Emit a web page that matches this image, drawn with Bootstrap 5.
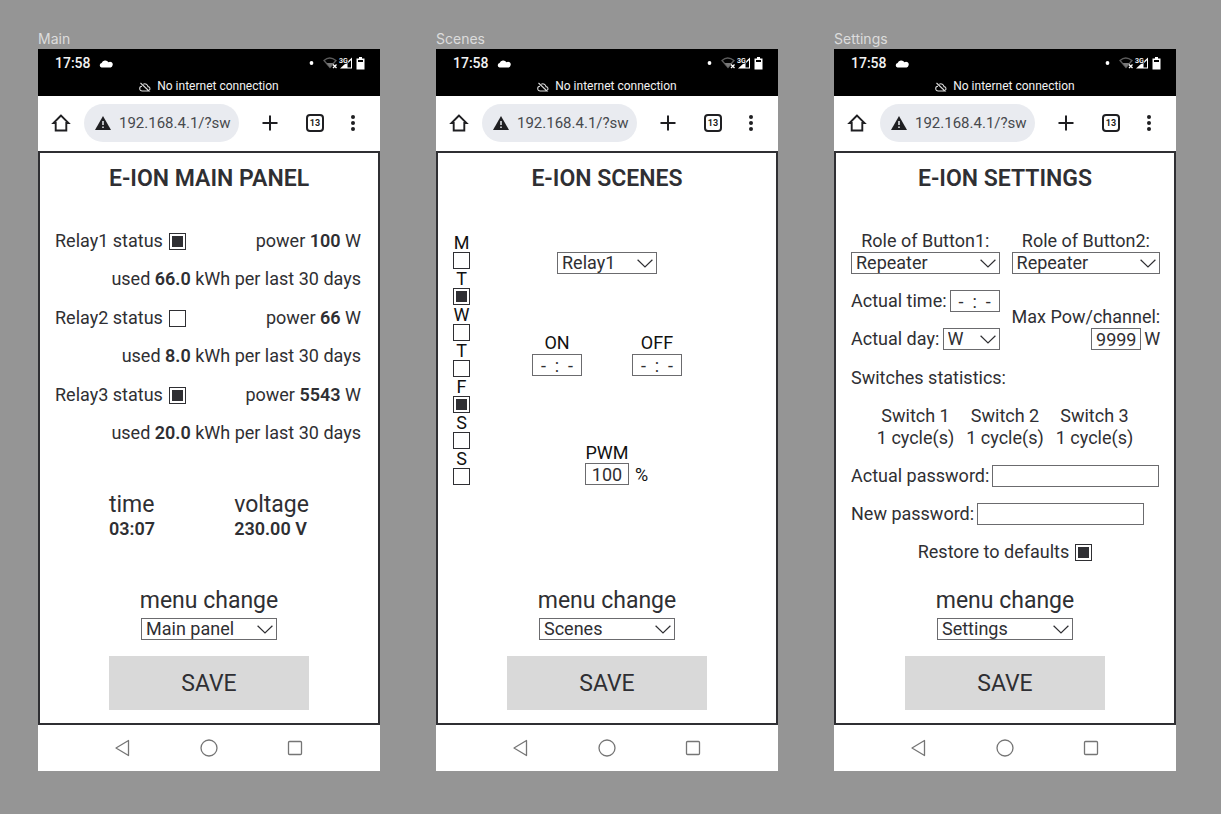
<!DOCTYPE html>
<html lang="en">
<head>
<meta charset="utf-8">
<meta name="viewport" content="width=device-width, initial-scale=1">
<title>E-ION panels</title>
<link href="https://cdn.jsdelivr.net/npm/bootstrap@5.3.0/dist/css/bootstrap.min.css" rel="stylesheet">
<style>
  :root { --ink: #2f2f33; --line: #6b6b6e; }
  body { background: #959595; color: var(--ink); font: 400 18px/22px Roboto, "Liberation Sans", sans-serif; }
  .board { display: grid; grid-template-columns: repeat(auto-fit, minmax(330px, 1fr)); gap: 28px 56px; padding: 28px 45px 43px 38px; }
  .board-title { font: 400 14px/21px Inter, sans-serif; color: #dcdcdc; margin: 0; }
  .phone { background: #fff; flex: 1; }

  .status-bar { background: #000; color: #f2f2f2; }
  .status-top { height: 28px; padding: 0 15px 0 17px; font-size: 14px; font-weight: 500; }
  .status-net { height: 19px; font-size: 12px; line-height: 19px; gap: 6px; }
  .tool-bar { height: 55px; padding: 0 25px 1px 13px; }
  .address { background: #e9ebf0; height: 38px; border-radius: 19px; padding: 0 8px 0 11px; margin: 0 22px 0 13px; min-width: 0; }
  .address input { border: 0; background: none; outline: 0; padding: 0; width: 100%; min-width: 0; font-size: 15px; color: #47494d; }
  .tool-actions { gap: 27px; }
  .plain { background: none; border: 0; padding: 0; display: flex; color: #1f1f22; }
  .tabs-count { border: 2px solid #1f1f22; border-radius: 4px; width: 18px; height: 18px; font-size: 9px; line-height: 14px; font-weight: 700; align-items: center; justify-content: center; }
  .nav-keys { height: 46px; gap: 68px; }

  .screen { border: 2px solid var(--ink); padding: 13px 15px; min-height: 574px; }
  .screen-title { font-size: 23px; line-height: 26px; font-weight: 600; margin: 0 0 38px; text-align: center; }
  .big { font-size: 23px; line-height: 28px; }
  .rows { display: flex; flex-direction: column; gap: 16px; }
  .readings { width: 200px; margin: 47px auto 0; line-height: 20px; }
  .relays { gap: 17px; padding-right: 2px; }
  b { font-weight: 600; }

  .field, .choice { border: 1px solid var(--line); border-radius: 0; background-color: #fff; color: var(--ink); font-size: 18px; line-height: 20px; height: 22px; min-height: 0; padding: 0 4px; }
  .choice { --bs-form-select-bg-img: url("data:image/svg+xml,%3csvg xmlns='http://www.w3.org/2000/svg' viewBox='0 0 16 9'%3e%3cpath d='M.6.8 8 8l7.4-7.2' fill='none' stroke='%232f2f33' stroke-width='1.2'/%3e%3c/svg%3e"); background-size: 16px 9px; background-position: right 3px center; }
  .field { text-align: center; }
  .w-time { width: 50px; padding: 0; }
  .w-pwm { width: 44px; padding: 0; }
  .w-menu { width: 136px; }
  .w-relay { width: 100px; }
  .w-day { width: 57px; }
  .w-pass { width: 167px; }
  .tick.form-check-input { width: 17px; height: 17px; margin: 0; border: 1px solid var(--ink); border-radius: 0; background-size: 100%; flex: none; float: none; }
  .tick.form-check-input:checked { background-color: #fff; border-color: var(--ink); background-image: url("data:image/svg+xml,%3csvg xmlns='http://www.w3.org/2000/svg' viewBox='0 0 15 15'%3e%3cpath d='M2 2h11v11H2z' fill='%232f2f33'/%3e%3c/svg%3e"); }

  .scene { display: grid; grid-template-columns: 17px 1fr 17px; color: #111; margin-top: 3px; }
  .day { display: flex; flex-direction: column; align-items: center; line-height: 19px; }
  .scene-form { padding-top: 19px; }
  .on-off { gap: 50px; margin: 58px 0 66px; }
  .pwm { display: grid; grid-template-columns: 1fr auto 1fr; column-gap: 6px; align-items: center; line-height: 21px; }
  .pwm label { grid-column: 2; text-align: center; margin: 0 -5px; }
  .pwm input { grid-column: 2; }
  .pairs { display: grid; grid-template-columns: 1fr 1fr; gap: 16px 12px; padding-bottom: 1px; }
  .inline-pair { display: flex; align-items: center; gap: 3px; white-space: nowrap; }
  .switches { gap: 12px; text-align: center; }
  .restore { gap: 6px; }
  .menu-block { margin-top: auto; }
  .menu-block .choice { margin-top: 3px; }
  .save { background: #d9d9d9; color: var(--ink); border: 0; border-radius: 0; width: 200px; height: 54px; font-size: 23px; line-height: 28px; margin-top: 16px; padding: 2px 0 0; }
</style>
</head>
<body>
<svg class="d-none" aria-hidden="true">
  <symbol id="i-cloud" viewBox="0 0 14 9"><path fill="#fff" d="M2.500 8.500A2.300 2.300 0 0 1 2.600 4 4 4 0 0 1 9.500 3.200 2.700 2.700 0 0 1 13.500 6.500 2.400 2.400 0 0 1 11.700 8.500z"/></symbol>
  <symbol id="i-radio" viewBox="0 0 56 14">
    <circle cx="2.500" cy="7" r="1.900" fill="#fff"/>
    <path d="M15 4.500Q20.500-.5 27 4.500L21 11.500z" fill="none" stroke="#5c5c5c" stroke-width="1.300"/><path d="M17.500 7h7L21 11.500z" fill="#777"/>
    <path d="M24 8.500l3.500 3.500m0-3.500L24 12" stroke="#fff" stroke-width="1.300"/>
    <path d="M31 12.500 43 1.500v11z" fill="#fff"/><path d="M38.500 7.500 42 4.200v7.300h-3.500z" fill="#000"/>
    <text x="30" y="6.500" font-size="7" font-weight="600" fill="#fff" stroke="#000" stroke-width="1.500" paint-order="stroke">3G</text>
    <path d="M50 1h3v1.500h2.500v11h-8v-11H50z" fill="#fff"/><path d="M49 4h5v2h-5z" fill="#000"/>
  </symbol>
  <symbol id="i-nocloud" viewBox="0 0 12 10"><path fill="none" stroke="#ddd" stroke-width="1.100" d="M1.500 1l8.500 8H3.200A2.300 2.300 0 0 1 3 4.200M4.300 2.200A3.200 3.200 0 0 1 9 4.600 2 2 0 0 1 10.400 8"/></symbol>
  <symbol id="i-home" viewBox="0 0 20 20"><path fill="none" stroke="#1f1f22" stroke-width="1.900" d="M10 2.500 2.500 10H4.700V17.500h10.600V10h2.200z"/></symbol>
  <symbol id="i-warn" viewBox="0 0 16 14"><path fill="#1f1f22" d="M8 0l8 14H0z"/><path stroke="#e9ebf0" stroke-width="1.500" d="M8 5v4m0 1.400v1.600"/></symbol>
  <symbol id="i-plus" viewBox="0 0 18 18"><path stroke="#1f1f22" stroke-width="2" d="M9 1.500v15M1.500 9h15"/></symbol>
  <symbol id="i-dots" viewBox="0 0 4 18"><g fill="#1f1f22"><circle cx="2" cy="3" r="2"/><circle cx="2" cy="9" r="2"/><circle cx="2" cy="15" r="2"/></g></symbol>
  <symbol id="i-back" viewBox="0 0 18 18"><path fill="none" stroke="#757575" stroke-width="1.300" stroke-linejoin="round" d="M14.500 1.500v15L2 9z"/></symbol>
  <symbol id="i-round" viewBox="0 0 18 18"><circle cx="9" cy="9" r="8" fill="none" stroke="#757575" stroke-width="1.300"/></symbol>
  <symbol id="i-square" viewBox="0 0 18 18"><rect x="2.500" y="2.500" width="13" height="13" rx="1" fill="none" stroke="#757575" stroke-width="1.300"/></symbol>
</svg>

<main class="board">
  <section class="d-flex flex-column">
    <h2 class="board-title">Main</h2>
    <div class="phone d-flex flex-column">
      <header class="status-bar">
        <div class="status-top d-flex align-items-center">17:58<svg class="ms-2" width="14" height="9"><use href="#i-cloud"/></svg><svg class="ms-auto" width="56" height="14"><use href="#i-radio"/></svg></div>
        <div class="status-net d-flex align-items-center justify-content-center"><svg width="12" height="10"><use href="#i-nocloud"/></svg>No internet connection</div>
      </header>
      <div class="tool-bar d-flex align-items-center">
        <button class="plain" aria-label="Home"><svg width="20" height="20"><use href="#i-home"/></svg></button>
        <div class="address d-flex align-items-center flex-grow-1"><svg class="me-2 flex-shrink-0" width="16" height="14"><use href="#i-warn"/></svg><input type="text" aria-label="Address" value="192.168.4.1/?switch"></div>
        <div class="tool-actions d-flex align-items-center"><button class="plain" aria-label="New tab"><svg width="18" height="18"><use href="#i-plus"/></svg></button><button class="plain tabs-count">13</button><button class="plain" aria-label="More"><svg width="4" height="18"><use href="#i-dots"/></svg></button></div>
      </div>
      <form class="screen d-flex flex-column flex-grow-1">
        <h1 class="screen-title">E-ION MAIN PANEL</h1>
        <div class="rows relays">
          <div class="rows">
            <div class="d-flex justify-content-between"><span class="d-flex align-items-center restore"><label for="r1">Relay1 status</label><input class="form-check-input tick" type="checkbox" id="r1" checked></span><span>power <b>100</b> W</span></div>
            <div class="text-end">used <b>66.0</b> kWh per last 30 days</div>
          </div>
          <div class="rows">
            <div class="d-flex justify-content-between"><span class="d-flex align-items-center restore"><label for="r2">Relay2 status</label><input class="form-check-input tick" type="checkbox" id="r2"></span><span>power <b>66</b> W</span></div>
            <div class="text-end">used <b>8.0</b> kWh per last 30 days</div>
          </div>
          <div class="rows">
            <div class="d-flex justify-content-between"><span class="d-flex align-items-center restore"><label for="r3">Relay3 status</label><input class="form-check-input tick" type="checkbox" id="r3" checked></span><span>power <b>5543</b> W</span></div>
            <div class="text-end">used <b>20.0</b> kWh per last 30 days</div>
          </div>
        </div>
        <div class="readings d-flex justify-content-between">
          <div><div class="big">time</div><b>03:07</b></div>
          <div><div class="big">voltage</div><b>230.00 V</b></div>
        </div>
        <div class="menu-block d-flex flex-column align-items-center">
          <label class="big" for="m1">menu change</label>
          <select class="form-select choice w-menu" id="m1"><option>Main panel</option><option>Scenes</option><option>Settings</option></select>
          <button type="button" class="btn save">SAVE</button>
        </div>
      </form>
      <nav class="nav-keys d-flex align-items-center justify-content-center"><button class="plain" aria-label="Back"><svg width="18" height="18"><use href="#i-back"/></svg></button><button class="plain" aria-label="Home screen"><svg width="18" height="18"><use href="#i-round"/></svg></button><button class="plain" aria-label="Recent"><svg width="18" height="18"><use href="#i-square"/></svg></button></nav>
    </div>
  </section>

  <section class="d-flex flex-column">
    <h2 class="board-title">Scenes</h2>
    <div class="phone d-flex flex-column">
      <header class="status-bar">
        <div class="status-top d-flex align-items-center">17:58<svg class="ms-2" width="14" height="9"><use href="#i-cloud"/></svg><svg class="ms-auto" width="56" height="14"><use href="#i-radio"/></svg></div>
        <div class="status-net d-flex align-items-center justify-content-center"><svg width="12" height="10"><use href="#i-nocloud"/></svg>No internet connection</div>
      </header>
      <div class="tool-bar d-flex align-items-center">
        <button class="plain" aria-label="Home"><svg width="20" height="20"><use href="#i-home"/></svg></button>
        <div class="address d-flex align-items-center flex-grow-1"><svg class="me-2 flex-shrink-0" width="16" height="14"><use href="#i-warn"/></svg><input type="text" aria-label="Address" value="192.168.4.1/?switch"></div>
        <div class="tool-actions d-flex align-items-center"><button class="plain" aria-label="New tab"><svg width="18" height="18"><use href="#i-plus"/></svg></button><button class="plain tabs-count">13</button><button class="plain" aria-label="More"><svg width="4" height="18"><use href="#i-dots"/></svg></button></div>
      </div>
      <form class="screen d-flex flex-column flex-grow-1">
        <h1 class="screen-title">E-ION SCENES</h1>
        <div class="scene">
          <div>
            <div class="day"><label for="d1">M</label><input class="form-check-input tick" type="checkbox" id="d1"></div>
            <div class="day"><label for="d2">T</label><input class="form-check-input tick" type="checkbox" id="d2" checked></div>
            <div class="day"><label for="d3">W</label><input class="form-check-input tick" type="checkbox" id="d3"></div>
            <div class="day"><label for="d4">T</label><input class="form-check-input tick" type="checkbox" id="d4"></div>
            <div class="day"><label for="d5">F</label><input class="form-check-input tick" type="checkbox" id="d5" checked></div>
            <div class="day"><label for="d6">S</label><input class="form-check-input tick" type="checkbox" id="d6"></div>
            <div class="day"><label for="d7">S</label><input class="form-check-input tick" type="checkbox" id="d7"></div>
          </div>
          <div class="scene-form">
            <select class="form-select choice w-relay mx-auto" aria-label="Relay"><option>Relay1</option><option>Relay2</option><option>Relay3</option></select>
            <div class="on-off d-flex justify-content-center">
              <div class="d-flex flex-column align-items-center"><label for="on">ON</label><input class="field w-time" id="on" type="text" value="-&nbsp; :&nbsp; -"></div>
              <div class="d-flex flex-column align-items-center"><label for="off">OFF</label><input class="field w-time" id="off" type="text" value="-&nbsp; :&nbsp; -"></div>
            </div>
            <div class="pwm"><label for="pwm">PWM</label><input class="field w-pwm" id="pwm" type="text" value="100"><span>%</span></div>
          </div>
        </div>
        <div class="menu-block d-flex flex-column align-items-center">
          <label class="big" for="m2">menu change</label>
          <select class="form-select choice w-menu" id="m2"><option>Main panel</option><option selected>Scenes</option><option>Settings</option></select>
          <button type="button" class="btn save">SAVE</button>
        </div>
      </form>
      <nav class="nav-keys d-flex align-items-center justify-content-center"><button class="plain" aria-label="Back"><svg width="18" height="18"><use href="#i-back"/></svg></button><button class="plain" aria-label="Home screen"><svg width="18" height="18"><use href="#i-round"/></svg></button><button class="plain" aria-label="Recent"><svg width="18" height="18"><use href="#i-square"/></svg></button></nav>
    </div>
  </section>

  <section class="d-flex flex-column">
    <h2 class="board-title">Settings</h2>
    <div class="phone d-flex flex-column">
      <header class="status-bar">
        <div class="status-top d-flex align-items-center">17:58<svg class="ms-2" width="14" height="9"><use href="#i-cloud"/></svg><svg class="ms-auto" width="56" height="14"><use href="#i-radio"/></svg></div>
        <div class="status-net d-flex align-items-center justify-content-center"><svg width="12" height="10"><use href="#i-nocloud"/></svg>No internet connection</div>
      </header>
      <div class="tool-bar d-flex align-items-center">
        <button class="plain" aria-label="Home"><svg width="20" height="20"><use href="#i-home"/></svg></button>
        <div class="address d-flex align-items-center flex-grow-1"><svg class="me-2 flex-shrink-0" width="16" height="14"><use href="#i-warn"/></svg><input type="text" aria-label="Address" value="192.168.4.1/?switch"></div>
        <div class="tool-actions d-flex align-items-center"><button class="plain" aria-label="New tab"><svg width="18" height="18"><use href="#i-plus"/></svg></button><button class="plain tabs-count">13</button><button class="plain" aria-label="More"><svg width="4" height="18"><use href="#i-dots"/></svg></button></div>
      </div>
      <form class="screen d-flex flex-column flex-grow-1">
        <h1 class="screen-title">E-ION SETTINGS</h1>
        <div class="rows">
          <div class="pairs">
            <div class="d-flex flex-column align-items-center"><label for="b1">Role of Button1:</label><select class="form-select choice" id="b1"><option>Repeater</option></select></div>
            <div class="d-flex flex-column align-items-center"><label for="b2">Role of Button2:</label><select class="form-select choice" id="b2"><option>Repeater</option></select></div>
            <div class="rows">
              <div class="inline-pair justify-content-between"><label for="at">Actual time:</label><input class="field w-time" id="at" type="text" value="-&nbsp; :&nbsp; -"></div>
              <div class="inline-pair justify-content-between"><label for="ad">Actual day:</label><select class="form-select choice w-day" id="ad"><option>W</option></select></div>
            </div>
            <div class="d-flex flex-column justify-content-end align-items-end text-nowrap">
              <label for="mp">Max Pow/channel:</label>
              <div class="inline-pair"><input class="field w-time" id="mp" type="text" value="9999"><span>W</span></div>
            </div>
          </div>
          <div>Switches statistics:</div>
          <div class="switches d-flex justify-content-center">
            <div>Switch 1<br>1 cycle(s)</div><div>Switch 2<br>1 cycle(s)</div><div>Switch 3<br>1 cycle(s)</div>
          </div>
          <div class="inline-pair"><label for="p1">Actual password:</label><input class="field w-pass" id="p1" type="password"></div>
          <div class="inline-pair"><label for="p2">New password:</label><input class="field w-pass" id="p2" type="password"></div>
          <div class="restore d-flex align-items-center justify-content-center"><label for="rd">Restore to defaults</label><input class="form-check-input tick" type="checkbox" id="rd" checked></div>
        </div>
        <div class="menu-block d-flex flex-column align-items-center">
          <label class="big" for="m3">menu change</label>
          <select class="form-select choice w-menu" id="m3"><option>Main panel</option><option>Scenes</option><option selected>Settings</option></select>
          <button type="button" class="btn save">SAVE</button>
        </div>
      </form>
      <nav class="nav-keys d-flex align-items-center justify-content-center"><button class="plain" aria-label="Back"><svg width="18" height="18"><use href="#i-back"/></svg></button><button class="plain" aria-label="Home screen"><svg width="18" height="18"><use href="#i-round"/></svg></button><button class="plain" aria-label="Recent"><svg width="18" height="18"><use href="#i-square"/></svg></button></nav>
    </div>
  </section>
</main>
<script src="https://cdn.jsdelivr.net/npm/bootstrap@5.3.0/dist/js/bootstrap.bundle.min.js"></script>
</body>
</html>
